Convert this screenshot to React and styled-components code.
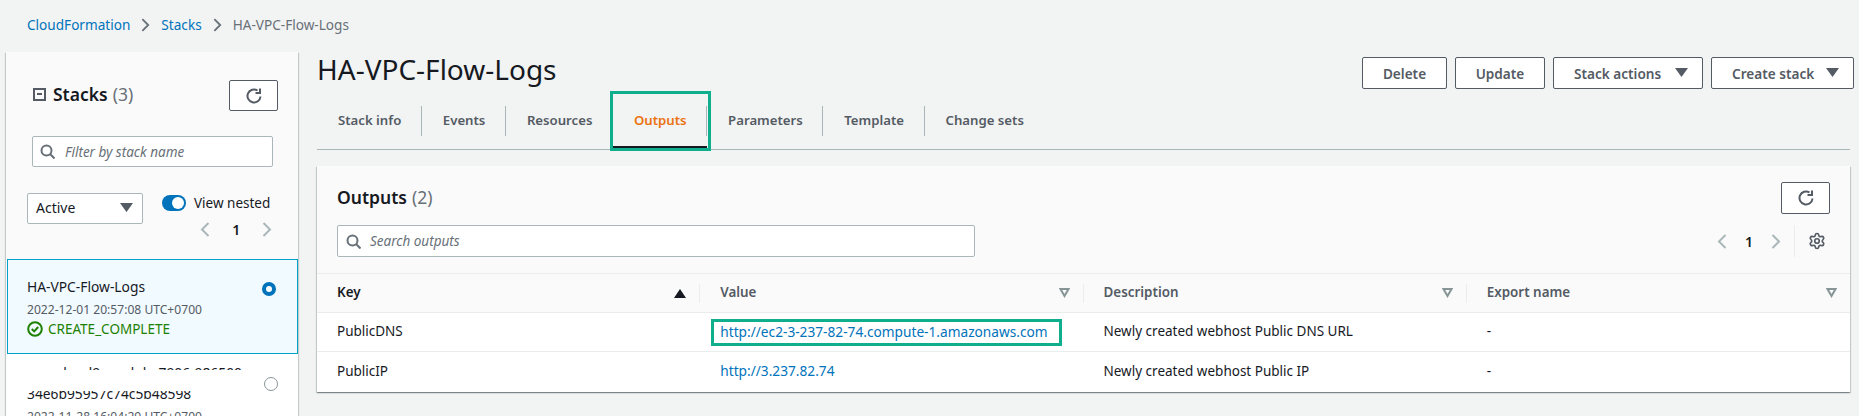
import React from "react";
import styled, { createGlobalStyle } from "styled-components";
import { Settings } from "lucide-react";

const TABS = ["Stack info", "Events", "Resources", "Outputs", "Parameters", "Template", "Change sets"];
const COLUMNS = ["Key", "Value", "Description", "Export name"];

const RefreshIcon = () => (
  <svg width="16" height="16" viewBox="0 0 16 16" fill="none" stroke="#545b64" strokeWidth="2">
    <path d="M14.5 8.5a6.5 6.5 0 1 1-3-6" />
    <path d="M14 0.5v4.5H9.5" strokeLinejoin="miter" />
  </svg>
);

const SearchIcon = () => (
  <svg width="15" height="15" viewBox="0 0 15 15" fill="none" stroke="#687078" strokeWidth="2">
    <circle cx="6.5" cy="6.5" r="5" />
    <path d="M10 10l4.5 4.5" />
  </svg>
);

const Chevron = ({ dir, color = "#aab7b8", width = 10, height = 15 }) => (
  <svg width={width} height={height} viewBox="0 0 10 15" fill="none" stroke={color} strokeWidth="2">
    <path d={dir === "left" ? "M8.5 1L2 7.5 8.5 14" : "M1.5 1L8 7.5 1.5 14"} />
  </svg>
);

const Caret = ({ size = 13 }) => (
  <svg width={size} height={size * 0.7} viewBox="0 0 10 7" fill="#545b64">
    <path d="M0 0h10L5 7z" />
  </svg>
);

const Pager = ({ gap }) => (
  <PagerRow $gap={gap}>
    <Chevron dir="left" />
    <PageNumber>1</PageNumber>
    <Chevron dir="right" />
  </PagerRow>
);

const App = () => (
  <Page>
    <GlobalStyle />
    <Breadcrumbs>
      <Crumb>CloudFormation</Crumb>
      <Chevron dir="right" color="#687078" width="9" height="14" />
      <Crumb>Stacks</Crumb>
      <Chevron dir="right" color="#687078" width="9" height="14" />
      <CurrentCrumb>HA-VPC-Flow-Logs</CurrentCrumb>
    </Breadcrumbs>
    <Content>
      <Sidebar>
        <SidebarHead>
          <SidebarTitle>
            <CollapseBox />
            <strong>Stacks</strong>
            <Count>(3)</Count>
          </SidebarTitle>
          <IconButton $w={49} $h={31}>
            <RefreshIcon />
          </IconButton>
        </SidebarHead>
        <FilterBox>
          <SearchIcon />
          <Placeholder>Filter by stack name</Placeholder>
        </FilterBox>
        <Controls>
          <Select>
            Active
            <Caret />
          </Select>
          <NestedColumn>
            <ToggleRow>
              <Toggle />
              View nested
            </ToggleRow>
            <SidebarPager>
              <Pager gap={22} />
            </SidebarPager>
          </NestedColumn>
        </Controls>
        <SelectedStack>
          <StackName>HA-VPC-Flow-Logs</StackName>
          <StackDate>2022-12-01 20:57:08 UTC+0700</StackDate>
          <Status>
            <svg width="16" height="16" viewBox="0 0 16 16" fill="none" stroke="#1d8102" strokeWidth="2">
              <circle cx="8" cy="8" r="6.8" />
              <path d="M4.8 8l2.4 2.4 4-4.4" />
            </svg>
            CREATE_COMPLETE
          </Status>
          <RadioOn />
        </SelectedStack>
        <OtherStack>
          <TornTop>aws-cloud9-module-7906-986500</TornTop>
          <TornBottom>34e6b95957c74c5b48598</TornBottom>
          <OtherDate>2022-11-28 16:04:29 UTC+0700</OtherDate>
          <RadioOff />
        </OtherStack>
      </Sidebar>
      <Main>
        <MainHead>
          <Title>HA-VPC-Flow-Logs</Title>
          <Actions>
            <Button $w={85}>Delete</Button>
            <Button $w={90}>Update</Button>
            <Button $w={150}>
              Stack actions
              <Caret />
            </Button>
            <Button $w={143}>
              Create stack
              <Caret />
            </Button>
          </Actions>
        </MainHead>
        <Tabs>
          {TABS.map(t => (
            <Tab key={t} $active={t === "Outputs"} $last={t === "Change sets"}>
              {t}
            </Tab>
          ))}
        </Tabs>
        <Card>
          <CardHead>
            <CardTop>
              <CardTitle>
                <strong>Outputs</strong>
                <Count>(2)</Count>
              </CardTitle>
              <IconButton $w={49} $h={32}>
                <RefreshIcon />
              </IconButton>
            </CardTop>
            <CardTools>
              <SearchBox>
                <SearchIcon />
                <Placeholder>Search outputs</Placeholder>
              </SearchBox>
              <ToolsRight>
                <Pager gap={18} />
                <ToolDivider />
                <Settings size={18} color="#545b64" strokeWidth={2.2} />
              </ToolsRight>
            </CardTools>
          </CardHead>
          <Table>
            <thead>
              <tr>
                {COLUMNS.map((c, i) => (
                  <HeadCell key={c} $sorted={i === 0}>
                    <HeadInner $sorted={i === 0} $last={i === 3}>
                      <HeadLabel>{c}</HeadLabel>
                      {i === 0 ? (
                        <svg width="12" height="9" viewBox="0 0 12 9" fill="#16191f">
                          <path d="M6 0l6 9H0z" />
                        </svg>
                      ) : (
                        <svg width="11" height="10" viewBox="0 0 11 10" fill="none" stroke="#879596" strokeWidth="2">
                          <path d="M1.5 1h8L5.5 8z" />
                        </svg>
                      )}
                    </HeadInner>
                  </HeadCell>
                ))}
              </tr>
            </thead>
            <tbody>
              <tr>
                <Cell>PublicDNS</Cell>
                <Cell>
                  <Highlight>
                    <ValueLink>http://ec2-3-237-82-74.compute-1.amazonaws.com</ValueLink>
                  </Highlight>
                </Cell>
                <Cell>Newly created webhost Public DNS URL</Cell>
                <Cell>-</Cell>
              </tr>
              <tr>
                <LastCell>PublicIP</LastCell>
                <LastCell>
                  <ValueLink>http://3.237.82.74</ValueLink>
                </LastCell>
                <LastCell>Newly created webhost Public IP</LastCell>
                <LastCell>-</LastCell>
              </tr>
            </tbody>
          </Table>
        </Card>
      </Main>
    </Content>
  </Page>
);

const GlobalStyle = createGlobalStyle`
  html, body {
    margin: 0;
    padding: 0;
    background: #f2f3f3;
  }
  * {
    box-sizing: border-box;
  }
`;

const Page = styled.div`
  width: 1859px;
  height: 416px;
  overflow: hidden;
  background: #f2f3f3;
  font-family: "Noto Sans", sans-serif;
  font-size: 14px;
  color: #16191f;
`;

const Breadcrumbs = styled.nav`
  height: 52px;
  padding: 0 0 3px 27px;
  display: flex;
  align-items: center;
  gap: 11px;
  font-size: 13.6px;
`;

const Crumb = styled.a`
  color: #0073bb;
`;

const CurrentCrumb = styled.span`
  color: #687078;
`;

const Content = styled.div`
  display: flex;
  padding-left: 6px;
`;

const Sidebar = styled.aside`
  width: 292px;
  height: 364px;
  flex: none;
  background: #fafafa;
  box-shadow: 0 1px 1px 0 rgba(0, 28, 36, 0.3), 1px 1px 1px 0 rgba(0, 28, 36, 0.15),
    -1px 1px 1px 0 rgba(0, 28, 36, 0.15);
  position: relative;
`;

const SidebarHead = styled.div`
  display: flex;
  justify-content: space-between;
  align-items: center;
  padding: 28px 20px 0 27px;
`;

const SidebarTitle = styled.div`
  display: flex;
  align-items: center;
  font-size: 17.5px;
  gap: 5px;
  margin-top: -3px;
  strong {
    font-weight: 600;
  }
`;

const CollapseBox = styled.span`
  width: 13px;
  height: 13px;
  margin-right: 2px;
  border: 2px solid #545b64;
  position: relative;
  &::after {
    content: "";
    position: absolute;
    left: 2px;
    right: 2px;
    top: 3.5px;
    height: 2px;
    background: #545b64;
  }
`;

const Count = styled.span`
  color: #687078;
  font-weight: 400;
`;

const IconButton = styled.button`
  width: ${p => p.$w}px;
  height: ${p => p.$h}px;
  padding: 0;
  display: flex;
  align-items: center;
  justify-content: center;
  background: #fff;
  border: 1px solid #545b64;
  border-radius: 2px;
`;

const FilterBox = styled.div`
  width: 241px;
  height: 31px;
  margin: 25px 0 0 26px;
  padding-left: 7px;
  display: flex;
  align-items: center;
  gap: 10px;
  background: #fff;
  border: 1px solid #aab7b8;
  border-radius: 2px;
`;

const Placeholder = styled.span`
  font-style: italic;
  font-size: 13.5px;
  color: #687078;
`;

const Controls = styled.div`
  height: 66px;
  margin-top: 26px;
  padding-left: 21px;
  display: flex;
  align-items: flex-start;
`;

const Select = styled.div`
  width: 116px;
  height: 31px;
  padding: 0 9px 2px 8px;
  display: flex;
  align-items: center;
  justify-content: space-between;
  background: #fff;
  border: 1px solid #aab7b8;
  border-radius: 2px;
`;

const NestedColumn = styled.div`
  margin-left: 19px;
  display: flex;
  flex-direction: column;
  align-items: flex-end;
  font-size: 13.5px;
`;

const ToggleRow = styled.div`
  display: flex;
  align-items: center;
  gap: 8px;
  height: 20px;
`;

const SidebarPager = styled.div`
  margin: 8px -2px 0 0;
`;

const Toggle = styled.span`
  width: 24px;
  height: 16px;
  border-radius: 8px;
  background: #0073bb;
  position: relative;
  &::after {
    content: "";
    position: absolute;
    right: 2px;
    top: 2px;
    width: 12px;
    height: 12px;
    border-radius: 50%;
    background: #fff;
  }
`;

const PagerRow = styled.div`
  display: flex;
  align-items: center;
  gap: ${p => p.$gap}px;
  height: 16px;
`;

const PageNumber = styled.span`
  font-weight: 600;
  font-size: 14px;
`;

const SelectedStack = styled.div`
  height: 95px;
  margin-left: 1px;
  padding: 17px 0 0 19px;
  background: #f1faff;
  border: 1px solid #00a1c9;
  position: relative;
`;

const StackName = styled.div`
  line-height: 20px;
  font-size: 13.8px;
`;

const StackDate = styled.div`
  margin-top: 3px;
  line-height: 19px;
  font-size: 12.1px;
  color: #545b64;
`;

const Status = styled.div`
  display: flex;
  align-items: center;
  gap: 5px;
  line-height: 20px;
  font-size: 13.5px;
  color: #1d8102;
`;

const Radio = styled.span`
  position: absolute;
  right: 21px;
  width: 14px;
  height: 14px;
  border-radius: 50%;
`;

const RadioOn = styled(Radio)`
  top: 22px;
  border: 4px solid #0073bb;
  background: #fff;
`;

const RadioOff = styled(Radio)`
  top: 23px;
  right: 20px;
  border: 1px solid #879596;
  background: #fff;
`;

const OtherStack = styled.div`
  height: 63px;
  margin-left: 1px;
  padding: 13px 0 0 20px;
  background: #fff;
  position: relative;
  font-size: 13.8px;
`;

const TornTop = styled.div`
  height: 3px;
  overflow: hidden;
  line-height: 12px;
`;

const TornBottom = styled.div`
  height: 9px;
  margin-top: 21px;
  overflow: hidden;
  line-height: 6px;
`;

const OtherDate = styled.div`
  margin-top: 7px;
  line-height: 19px;
  font-size: 12.1px;
  color: #545b64;
`;

const Main = styled.main`
  width: 1537px;
  margin-left: 19px;
  flex: none;
`;

const MainHead = styled.div`
  height: 32px;
  margin-top: 5px;
  display: flex;
  align-items: center;
  justify-content: space-between;
`;

const Title = styled.h1`
  margin: 0;
  font-size: 28px;
  font-weight: 400;
  line-height: 32px;
  position: relative;
  top: -4px;
`;

const Actions = styled.div`
  display: flex;
  gap: 8px;
`;

const Button = styled.button`
  width: ${p => p.$w}px;
  height: 32px;
  padding: 0 14px 0 20px;
  display: flex;
  align-items: center;
  justify-content: ${p => (p.$w > 100 ? "space-between" : "center")};
  ${p => (p.$w > 100 ? "" : "padding: 0;")}
  background: #fff;
  border: 1px solid #545b64;
  border-radius: 2px;
  font-family: inherit;
  font-size: 13.6px;
  font-weight: 600;
  color: #545b64;
`;

const Tabs = styled.div`
  height: 44px;
  margin: 17px 4px 0 0;
  display: flex;
  border-bottom: 1px solid #aab7b8;
`;

const Tab = styled.div`
  height: 44px;
  padding: 4px 20.5px 0 21px;
  line-height: 20px;
  font-size: 13.2px;
  font-weight: 600;
  color: ${p => (p.$active ? "#ec7211" : "#545b64")};
  position: relative;
  ${p =>
    !p.$last &&
    `&::before {
      content: "";
      position: absolute;
      right: 0;
      top: 0;
      width: 1px;
      height: 30px;
      background: #aab7b8;
    }`}
  ${p =>
    p.$active &&
    `border-bottom: 2px solid #16191f;
    height: 42px;
    &::after {
      content: "";
      position: absolute;
      left: -3px;
      right: -4px;
      top: -15px;
      bottom: -5px;
      border: 3px solid #0fae8d;
    }`}
`;

const Card = styled.section`
  width: 1533px;
  margin-top: 16px;
  background: #fff;
  box-shadow: 0 1px 1px 0 rgba(0, 28, 36, 0.3), 1px 1px 1px 0 rgba(0, 28, 36, 0.15),
    -1px 1px 1px 0 rgba(0, 28, 36, 0.15);
`;

const CardHead = styled.div`
  height: 107px;
  padding: 16px 20px 0;
  background: #fafafa;
`;

const CardTop = styled.div`
  display: flex;
  align-items: center;
  justify-content: space-between;
`;

const CardTitle = styled.div`
  display: flex;
  gap: 5px;
  font-size: 17.5px;
  margin-top: -3px;
  strong {
    font-weight: 600;
  }
`;

const CardTools = styled.div`
  margin-top: 11px;
  display: flex;
  align-items: center;
  justify-content: space-between;
`;

const SearchBox = styled.div`
  width: 638px;
  height: 32px;
  padding-left: 8px;
  display: flex;
  align-items: center;
  gap: 9px;
  background: #fff;
  border: 1px solid #aab7b8;
  border-radius: 2px;
`;

const ToolsRight = styled.div`
  display: flex;
  align-items: center;
  height: 32px;
  padding-right: 4px;
`;

const ToolDivider = styled.span`
  width: 1px;
  height: 32px;
  margin: 0 13px;
  background: #eaeded;
`;

const Table = styled.table`
  width: 100%;
  border-collapse: collapse;
  table-layout: fixed;
`;

const HeadCell = styled.th`
  height: 39px;
  padding: 0;
  background: #fafafa;
  border-top: 1px solid #eaeded;
  border-bottom: 1px solid #eaeded;
  font-weight: 600;
  font-size: 13.4px;
  text-align: left;
  color: ${p => (p.$sorted ? "#16191f" : "#545b64")};
`;

const HeadInner = styled.div`
  height: 19px;
  padding: 0 13px 0 20px;
  display: flex;
  align-items: center;
  justify-content: space-between;
  ${p => (p.$last ? "" : "border-right: 1px solid #eaeded;")}
`;

const HeadLabel = styled.span`
  margin-top: -2px;
`;

const Cell = styled.td`
  height: 39px;
  padding: 0 20px 2px;
  font-size: 13.5px;
  border-bottom: 1px solid #eaeded;
`;

const LastCell = styled(Cell)`
  height: 40px;
  border-bottom: none;
`;

const Highlight = styled.span`
  display: block;
  width: 351px;
  height: 27px;
  margin: 2px 0 0 -9px;
  padding-left: 6px;
  line-height: 20px;
  border: 3px solid #0fae8d;
`;

const ValueLink = styled.a`
  color: #0073bb;
  font-size: 13.7px;
`;

export default App;
